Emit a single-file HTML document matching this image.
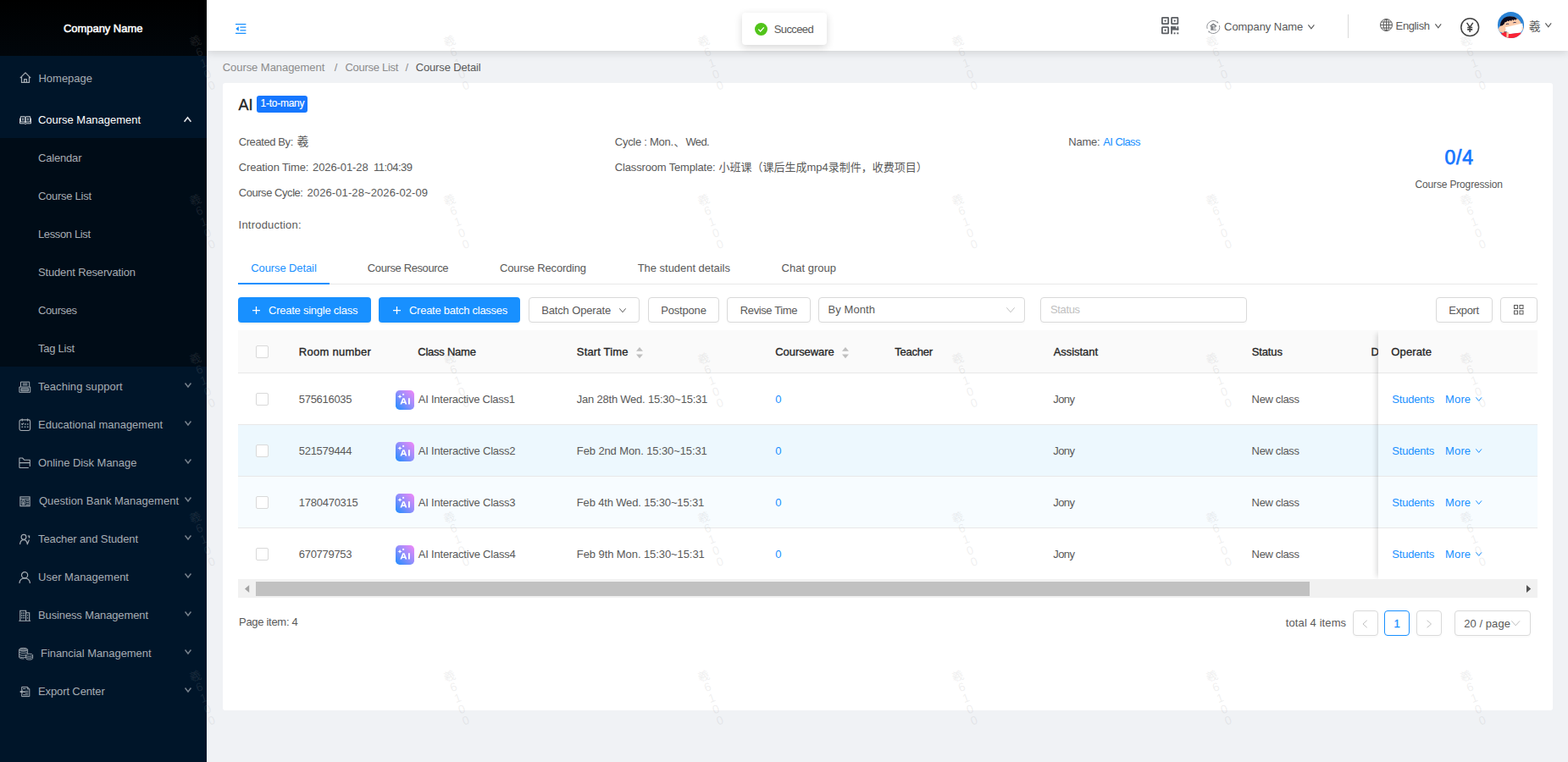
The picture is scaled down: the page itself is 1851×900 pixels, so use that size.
<!DOCTYPE html>
<html lang="en"><head><meta charset="utf-8"><title>Course Detail</title>
<style>
html,body{margin:0;padding:0;}
body{width:1851px;height:900px;overflow:hidden;background:#f0f2f5;position:relative;font-family:"Liberation Sans",sans-serif;font-size:13px;color:#595959;}
.t{position:absolute;white-space:pre;display:block;}
.a{position:absolute;display:block;}
svg{position:absolute;display:block;overflow:visible;}

</style></head>
<body>
<aside><div class="a" style="left:0px;top:0px;width:244px;height:900px;background:#001529"></div><div class="a" style="left:0px;top:0px;width:244px;height:66px;background:linear-gradient(#000,#01060b)"></div><div class="a" style="left:0px;top:163px;width:244px;height:270px;background:#000c17"></div><span class="t" style="left:74.95px;top:26.00px;font-size:13px;line-height:15px;color:#fff;letter-spacing:-0.040px;-webkit-text-stroke:0.5px #fff;">Company Name</span><span class="t" style="left:45.50px;top:85.00px;font-size:13px;line-height:15px;color:#a6adb4;letter-spacing:-0.016px;">Homepage</span><svg style="left:22.9px;top:85px" width="14" height="14" viewBox="0 0 14 14" ><path d="M.8 7.100 7 .9l6.200 6.200M2.500 6v6.400h9V6M5.600 12.400V8.500h2.800v3.900" fill="none" stroke="#a6adb4" stroke-width="1.250" stroke-linejoin="round"/></svg><span class="t" style="left:45.00px;top:134.00px;font-size:13px;line-height:15px;color:#fff;letter-spacing:-0.025px;">Course Management</span><svg style="left:22.5px;top:134px" width="14" height="14" viewBox="0 0 14 14" ><path d="M1.400 3.700h4.600c.6 0 1 .4 1 1v6c0-.5-.4-.8-1-.8H1.400zM12.600 3.700H8c-.6 0-1 .4-1 1v6c0-.5.4-.8 1-.8h4.600zM.5 5.600v6.200h5.300l1.200.8 1.200-.8h5.300V5.600M3 5.900h2.200M3 7.700h2.200M8.800 5.900H11M8.800 7.700H11" fill="none" stroke="#fff" stroke-width=".8"/></svg><svg style="left:217.4px;top:137.6px" width="9" height="6.2" viewBox="0 0 9 6.2" ><path d="M0.56 5.64 4.5 0.76 8.44 5.64" fill="none" stroke="#e4e7ea" stroke-width="1.6"/></svg><span class="t" style="left:45.00px;top:179.00px;font-size:13px;line-height:15px;color:#a6adb4;letter-spacing:-0.181px;">Calendar</span><span class="t" style="left:45.00px;top:224.00px;font-size:13px;line-height:15px;color:#a6adb4;letter-spacing:-0.275px;">Course List</span><span class="t" style="left:45.00px;top:269.00px;font-size:13px;line-height:15px;color:#a6adb4;letter-spacing:-0.377px;">Lesson List</span><span class="t" style="left:45.00px;top:314.00px;font-size:13px;line-height:15px;color:#a6adb4;letter-spacing:-0.155px;">Student Reservation</span><span class="t" style="left:45.00px;top:359.00px;font-size:13px;line-height:15px;color:#a6adb4;letter-spacing:-0.404px;">Courses</span><span class="t" style="left:45.00px;top:404.00px;font-size:13px;line-height:15px;color:#a6adb4;letter-spacing:-0.259px;">Tag List</span><span class="t" style="left:45.00px;top:449.00px;font-size:13px;line-height:15px;color:#a6adb4;letter-spacing:0.046px;">Teaching support</span><svg style="left:21.9px;top:450px" width="14" height="14" viewBox="0 0 14 14" ><path d="M2.500 6.700V1.100h10.200v5.600M4.700 3h5.800M4.700 4.800h5.800M.9 7h12.800v6.300H.9zM3 8.700h8.600v3.200H3zM3 10.300h8.600" fill="none" stroke="#a6adb4" stroke-width="1"/></svg><svg style="left:218px;top:452.2px" width="8" height="5.7" viewBox="0 0 8 5.7" ><path d="M0.52 0.52 4.0 4.98 7.47 0.52" fill="none" stroke="#76818c" stroke-width="1.5"/></svg><span class="t" style="left:45.00px;top:494.00px;font-size:13px;line-height:15px;color:#a6adb4;letter-spacing:-0.011px;">Educational management</span><svg style="left:21.9px;top:495px" width="14" height="14" viewBox="0 0 14 14" ><rect x="1" y=".9" width="12.600" height="12.600" rx="1.900" fill="none" stroke="#a6adb4" stroke-width="1.100"/><path d="M4.200 -.6v3M10.600 -.6v3M3.200 5.400l1.100 1.100 1.700-1.800" fill="none" stroke="#a6adb4" stroke-width="1.100"/><path d="M7 5.300h1.700v1.500H7zM9.900 5.300h1.700v1.500H9.900zM3.400 8.400h1.700v1.500H3.400zM6.700 8.400h1.700v1.500H6.700zM9.900 8.400h1.700v1.500H9.900z" fill="#a6adb4" opacity=".85"/></svg><svg style="left:218px;top:497.2px" width="8" height="5.7" viewBox="0 0 8 5.7" ><path d="M0.52 0.52 4.0 4.98 7.47 0.52" fill="none" stroke="#76818c" stroke-width="1.5"/></svg><span class="t" style="left:45.00px;top:539.00px;font-size:13px;line-height:15px;color:#a6adb4;letter-spacing:-0.039px;">Online Disk Manage</span><svg style="left:21.9px;top:540px" width="14" height="14" viewBox="0 0 14 14" ><path d="M.9 12.500V1h3.600l2.300 2.300h6.500v7.600M.9 6.600h12.400M.9 12.500h10.900" fill="none" stroke="#a6adb4" stroke-width="1.100" stroke-linejoin="round"/></svg><svg style="left:218px;top:542.2px" width="8" height="5.7" viewBox="0 0 8 5.7" ><path d="M0.52 0.52 4.0 4.98 7.47 0.52" fill="none" stroke="#76818c" stroke-width="1.5"/></svg><span class="t" style="left:46.00px;top:584.00px;font-size:13px;line-height:15px;color:#a6adb4;letter-spacing:0.010px;">Question Bank Management</span><svg style="left:21.9px;top:585px" width="14" height="14" viewBox="0 0 14 14" ><rect x="1.900" y="1.900" width="11.200" height="10.800" fill="none" stroke="#a6adb4" stroke-width="1.100"/><path d="M1.900 4.300h11.200M4 5.900h3.200v5H4zM5.600 7.500v3.400M8.600 6.300h3.400M8.600 8.700h3.400M8.600 11h3.400" fill="none" stroke="#a6adb4" stroke-width="1"/></svg><svg style="left:218px;top:587.2px" width="8" height="5.7" viewBox="0 0 8 5.7" ><path d="M0.52 0.52 4.0 4.98 7.47 0.52" fill="none" stroke="#76818c" stroke-width="1.5"/></svg><span class="t" style="left:45.00px;top:629.00px;font-size:13px;line-height:15px;color:#a6adb4;letter-spacing:-0.110px;">Teacher and Student</span><svg style="left:21.9px;top:630px" width="14" height="14" viewBox="0 0 14 14" ><circle cx="6" cy="4.300" r="2.900" fill="none" stroke="#a6adb4" stroke-width="1.150"/><path d="M1.600 13C1.800 9.600 3.600 7.600 6 7.600s4 1.700 4.300 5.200L12.400 7.500" fill="none" stroke="#a6adb4" stroke-width="1.150" stroke-linejoin="round"/><path d="M10.700 2.400h2.500v3h-1.400V3.600h-1.100z" fill="#a6adb4"/></svg><svg style="left:218px;top:632.2px" width="8" height="5.7" viewBox="0 0 8 5.7" ><path d="M0.52 0.52 4.0 4.98 7.47 0.52" fill="none" stroke="#76818c" stroke-width="1.5"/></svg><span class="t" style="left:45.00px;top:674.00px;font-size:13px;line-height:15px;color:#a6adb4;letter-spacing:0.003px;">User Management</span><svg style="left:21.9px;top:675px" width="14" height="14" viewBox="0 0 14 14" ><circle cx="7.100" cy="4.300" r="3.600" fill="none" stroke="#a6adb4" stroke-width="1.200"/><path d="M.9 13.900C1.300 10 3.800 7.900 7.100 7.900s5.900 2.100 6.400 6" fill="none" stroke="#a6adb4" stroke-width="1.200"/></svg><svg style="left:218px;top:677.2px" width="8" height="5.7" viewBox="0 0 8 5.7" ><path d="M0.52 0.52 4.0 4.98 7.47 0.52" fill="none" stroke="#76818c" stroke-width="1.5"/></svg><span class="t" style="left:45.00px;top:719.00px;font-size:13px;line-height:15px;color:#a6adb4;letter-spacing:-0.125px;">Business Management</span><svg style="left:21.9px;top:720px" width="14" height="14" viewBox="0 0 14 14" ><path d="M1.800 13V1.300h6.800V13M8.600 3.700h4.100V13M.3 13.300h13.800" fill="none" stroke="#a6adb4" stroke-width="1.100"/><path d="M3.600 3.300v8M5.200 3.300v8M6.800 3.300v8M10.600 5.800v2M10.600 9v2" fill="none" stroke="#a6adb4" stroke-width=".9" stroke-dasharray="1.800 .9"/></svg><svg style="left:218px;top:722.2px" width="8" height="5.7" viewBox="0 0 8 5.7" ><path d="M0.52 0.52 4.0 4.98 7.47 0.52" fill="none" stroke="#76818c" stroke-width="1.5"/></svg><span class="t" style="left:48.00px;top:764.00px;font-size:13px;line-height:15px;color:#a6adb4;letter-spacing:-0.049px;">Financial Management</span><svg style="left:21.9px;top:765px" width="14" height="14" viewBox="0 0 14 14" ><ellipse cx="5.600" cy="2.300" rx="5" ry="1.900" fill="#a6adb4" fill-opacity=".55" stroke="#a6adb4" stroke-width=".9"/><path d="M.6 2.300v8.900c0 1.300 3 1.900 6 1.700M10.600 2.300v4.500M.6 4.900c0 2 10 2 10 0M.6 7.400c0 1.600 4 2 7.600 1.500M.6 9.900c0 1.500 4 2 7.600 1.500" fill="none" stroke="#a6adb4" stroke-width=".9"/><ellipse cx="12.600" cy="8.700" rx="4" ry="1.500" fill="none" stroke="#a6adb4" stroke-width=".9"/><path d="M8.600 8.700v3.900c0 2 8 2 8 0V8.700M8.600 10.700c0 2 8 2 8 0" fill="none" stroke="#a6adb4" stroke-width=".9"/></svg><svg style="left:218px;top:767.2px" width="8" height="5.7" viewBox="0 0 8 5.7" ><path d="M0.52 0.52 4.0 4.98 7.47 0.52" fill="none" stroke="#76818c" stroke-width="1.5"/></svg><span class="t" style="left:45.00px;top:809.00px;font-size:13px;line-height:15px;color:#a6adb4;letter-spacing:-0.117px;">Export Center</span><svg style="left:21.9px;top:810px" width="14" height="14" viewBox="0 0 14 14" ><path d="M3.700 5V1.400h6.800l2.300 2.300v8.900H3.700V9.200M10.300 1.600v2.300h2.300M5 3.400h3.400M7.600 6.400h3.800M7.600 8.600h3.800M5.200 10.700h6.200" fill="none" stroke="#a6adb4" stroke-width="1"/><path d="M1 7l3.600-2.500v1.800h3.200v1.400H4.600v1.800z" fill="#a6adb4"/></svg><svg style="left:218px;top:812.2px" width="8" height="5.700" viewBox="0 0 8 5.7" ><path d="M0.52 0.52 4.0 4.98 7.47 0.52" fill="none" stroke="#76818c" stroke-width="1.5"/></svg></aside>
<header><div class="a" style="left:244px;top:0px;width:1607px;height:60px;background:#fff;box-shadow:0 2px 10px rgba(0,0,0,.14)"></div><svg style="left:278px;top:28px" width="13" height="12" viewBox="0 0 13 12" ><path d="M0 .6h12.400M5.400 4.200h7M5.400 7.800h7M0 11.400h12.400" stroke="#1890ff" stroke-width="1.200" fill="none"/><path d="M3.800 3.200v5.600L.3 6z" fill="#1890ff"/></svg><div class="a" style="left:876px;top:15px;width:100px;height:38px;background:#fff;border-radius:4px;box-shadow:0 3px 10px rgba(0,0,0,.16)"></div><svg style="left:891px;top:27px" width="15" height="15" viewBox="0 0 15 15" ><circle cx="7.500" cy="7.500" r="7.500" fill="#52c41a"/><path d="M4.300 7.600 6.700 10l4.100-4.600" fill="none" stroke="#fff" stroke-width="1.300"/></svg><span class="t" style="left:913.70px;top:27.00px;font-size:13px;line-height:15px;color:#595959;letter-spacing:-0.599px;">Succeed</span><svg style="left:1371.05px;top:20.05px" width="20.4" height="20.4" viewBox="0 0 20.4 20.4" ><g fill="none" stroke="#5c5f64" stroke-width="1.800"><rect x=".9" y=".9" width="7.300" height="7.300" rx=".6"/><rect x="12.100" y=".9" width="7.300" height="7.300" rx=".6"/><rect x=".9" y="12.100" width="7.300" height="7.300" rx=".6"/></g><g fill="#5c5f64"><circle cx="4.550" cy="4.550" r="1.150"/><circle cx="15.750" cy="4.550" r="1.150"/><circle cx="4.550" cy="15.750" r="1.150"/><rect x="11.200" y="11.200" width="1.800" height="9.100"/><rect x="11.200" y="11.200" width="6" height="3.600"/><rect x="18.500" y="11.200" width="1.800" height="4.400"/><rect x="13" y="13.400" width="7.300" height="2.200"/><rect x="14.600" y="18.400" width="1.900" height="1.900"/><rect x="18.400" y="18.400" width="1.900" height="1.900"/></g></svg><svg style="left:1423.6px;top:23.9px" width="16.6" height="16" viewBox="0 0 16.6 16" ><path d="M1.15 9.92A7.4 7.4 0 0 1 13.25 2.50M15.45 6.08A7.4 7.4 0 0 1 3.35 13.50" fill="none" stroke="#8e9196" stroke-width="1"/><path d="M14.44 3.57L13.68 1.13L11.94 3.07zM2.16 12.43L2.92 14.87L4.66 12.93z" fill="#8e9196"/><path d="M4.600 7.100 8.300 4.400 12 7.100" fill="none" stroke="#7d8085" stroke-width="1.300"/><path d="M5.900 7.400h1.900v3.400H5.900zM8.700 7.300h2.600M8.700 9h2.200M5.200 11.200h6.600" fill="none" stroke="#7d8085" stroke-width="1.100"/><rect x="6" y="7.400" width="1.800" height="3.600" fill="#7d8085"/></svg><span class="t" style="left:1445.10px;top:24.00px;font-size:13px;line-height:15px;color:#595959;letter-spacing:-0.067px;">Company Name</span><svg style="left:1543.8px;top:29px" width="7.8" height="5.5" viewBox="0 0 7.8 5.5" ><path d="M0.40 0.40 3.9 4.90 7.40 0.40" fill="none" stroke="#595959" stroke-width="1.15"/></svg><div class="a" style="left:1591px;top:17px;width:1px;height:28px;background:#d9d9d9"></div><svg style="left:1629.2px;top:21.8px" width="15" height="15" viewBox="0 0 15 15" ><g fill="none" stroke="#595959" stroke-width="1"><circle cx="7.500" cy="7.500" r="7"/><ellipse cx="7.500" cy="7.500" rx="3.200" ry="7"/><path d="M7.500 .5v14M.5 7.500h14M1.500 4h12M1.500 11h12"/></g></svg><span class="t" style="left:1647.60px;top:23.00px;font-size:13px;line-height:15px;color:#595959;letter-spacing:-0.373px;">English</span><svg style="left:1694px;top:27.8px" width="7.6" height="5.4" viewBox="0 0 7.6 5.4" ><path d="M0.40 0.40 3.8 4.80 7.20 0.40" fill="none" stroke="#595959" stroke-width="1.15"/></svg><svg style="left:1723.8px;top:20.7px" width="22.4" height="22.4" viewBox="0 0 22.4 22.4" ><circle cx="11.200" cy="11.200" r="10.400" fill="none" stroke="#434343" stroke-width="1.500"/><path d="M7.600 5.900l3.600 5.300 3.600-5.300M11.200 11v6M8.200 11.500h6M8.200 13.900h6" fill="none" stroke="#434343" stroke-width="1.550"/></svg><svg style="left:1768.05px;top:13.9px" width="31.1" height="31.1" viewBox="0 0 31.1 31.1" ><defs><clipPath id="avc"><circle cx="15.550" cy="15.550" r="15.550"/></clipPath></defs><g clip-path="url(#avc)"><rect width="31.100" height="31.100" fill="#2a82d4"/><path d="M3.200 18C2.600 11 8 5.600 14.500 5.600c5 0 9 1.500 12.500 6.500l2 6-3 6-20 2z" fill="#fccbaa"/><path d="M3 17.800C2.400 10 8 5.200 14.500 5.300c4 0 7.400 1.200 9 3.400l-1.800-.2-.5 1.500-1.600-1.200-.9 1.700-1.600-1.400-1.100 1.800-1.600-1.200-1.300 1.600-1.600-.9-1.300 1.700-1.700.1-.9 2.300-1.200.8-1.400 2z" fill="#0b0b1e"/><path d="M9.800 14.700c1-.6 2.400-.7 3.400-.4M18.300 12.900c1-.5 2.300-.6 3.300-.3" stroke="#23234a" stroke-width=".9" fill="none"/><path d="M8.800 18.200 29.200 13.500l1 6.200-3 5-13.500 1.500-4.700-3.200z" fill="#fff"/><path d="M28.700 17.500c1.500.5 1.800 3 0 5z" fill="#f4c2a2"/><path d="M4 25.500 9 23.800l4.500 2.400 13.700-1.600 2.500 2.400-3 4.500H7z" fill="#fb2335"/><path d="M10.500 24h2.600l-.7 7.500h-2z" fill="#fccbaa"/><circle cx="5.300" cy="20.400" r="4.200" fill="#fccbaa"/><path d="M7.500 23.800c1.200-.3 2.600-.2 3.800.2" stroke="#3b3558" stroke-width=".8" fill="none"/></g></svg><span class="t" style="left:1804.70px;top:23.50px;font-size:13.8px;line-height:15px;color:#595959;font-family:'Liberation Sans','Noto Sans CJK SC',sans-serif;">羲</span><svg style="left:1823.7px;top:26.9px" width="7.6" height="5.4" viewBox="0 0 7.6 5.4" ><path d="M0.40 0.40 3.8 4.80 7.20 0.40" fill="none" stroke="#595959" stroke-width="1.15"/></svg></header>
<nav><span class="t" style="left:262.70px;top:72.00px;font-size:13px;line-height:15px;color:#8c8c8c;letter-spacing:-0.050px;">Course Management</span><span class="t" style="left:394.80px;top:72.00px;font-size:13px;line-height:15px;color:#8c8c8c;">/</span><span class="t" style="left:407.50px;top:72.00px;font-size:13px;line-height:15px;color:#8c8c8c;letter-spacing:-0.295px;">Course List</span><span class="t" style="left:478.60px;top:72.00px;font-size:13px;line-height:15px;color:#8c8c8c;">/</span><span class="t" style="left:490.70px;top:72.00px;font-size:13px;line-height:15px;color:#595959;letter-spacing:-0.147px;">Course Detail</span></nav>
<main><div class="a" style="left:263px;top:98px;width:1570px;height:741px;background:#fff;border-radius:3px"></div><span class="t" style="left:281.60px;top:113.70px;font-size:18px;line-height:20px;color:#1f1f1f;letter-spacing:-0.016px;-webkit-text-stroke:0.35px #1f1f1f;">AI</span><div class="a" style="left:303px;top:113px;width:60px;height:20px;background:#1677ff;border-radius:3px"></div><span class="t" style="left:307.50px;top:115.00px;font-size:12px;line-height:14px;color:#fff;letter-spacing:-0.254px;-webkit-text-stroke:0.15px #fff;">1-to-many</span><span class="t" style="left:281.70px;top:160.00px;font-size:13px;line-height:15px;color:#595959;letter-spacing:-0.406px;">Created By:</span><span class="t" style="left:350.40px;top:160.00px;font-size:13.8px;line-height:15px;color:#595959;font-family:'Liberation Sans','Noto Sans CJK SC',sans-serif;">羲</span><span class="t" style="left:281.70px;top:190.00px;font-size:13px;line-height:15px;color:#595959;letter-spacing:-0.134px;">Creation Time:</span><span class="t" style="left:369.00px;top:190.00px;font-size:13px;line-height:15px;color:#595959;letter-spacing:-0.089px;">2026-01-28</span><span class="t" style="left:441.00px;top:190.00px;font-size:13px;line-height:15px;color:#595959;letter-spacing:-0.520px;">11:04:39</span><span class="t" style="left:281.70px;top:220.00px;font-size:13px;line-height:15px;color:#595959;letter-spacing:-0.445px;">Course Cycle:</span><span class="t" style="left:362.50px;top:220.00px;font-size:13px;line-height:15px;color:#595959;letter-spacing:0.100px;">2026-01-28~2026-02-09</span><span class="t" style="left:281.60px;top:258.00px;font-size:13px;line-height:15px;color:#595959;letter-spacing:0.204px;">Introduction:</span><span class="t" style="left:725.80px;top:160.00px;font-size:13px;line-height:15px;color:#595959;letter-spacing:-0.277px;">Cycle : Mon.</span><span class="t" style="left:795.50px;top:160.00px;font-size:13px;line-height:15px;color:#595959;font-family:'Liberation Sans','Noto Sans CJK SC',sans-serif;">、</span><span class="t" style="left:809.40px;top:160.00px;font-size:13px;line-height:15px;color:#595959;letter-spacing:-0.603px;">Wed.</span><span class="t" style="left:725.80px;top:190.00px;font-size:13px;line-height:15px;color:#595959;letter-spacing:-0.165px;">Classroom Template:</span><span class="t" style="left:848.50px;top:190.00px;font-size:13px;line-height:15px;color:#595959;font-family:'Liberation Sans','Noto Sans CJK SC',sans-serif;">小班课（课后生成mp4录制件，收费项目）</span><span class="t" style="left:1261.30px;top:160.00px;font-size:13px;line-height:15px;color:#595959;letter-spacing:-0.249px;">Name:</span><span class="t" style="left:1302.30px;top:160.00px;font-size:13px;line-height:15px;color:#1890ff;letter-spacing:-0.601px;">AI Class</span><span class="t" style="left:1705.50px;top:173.00px;font-size:23px;line-height:26px;color:#1677ff;letter-spacing:0.808px;-webkit-text-stroke:0.75px #1677ff;">0/4</span><span class="t" style="left:1670.50px;top:211.00px;font-size:12px;line-height:14px;color:#595959;letter-spacing:-0.157px;">Course Progression</span><div class="a" style="left:281px;top:335px;width:1534px;height:1px;background:#e8e8e8"></div><div class="a" style="left:281px;top:334px;width:108px;height:2px;background:#1890ff"></div><span class="t" style="left:296.30px;top:309.40px;font-size:13px;line-height:15px;color:#1890ff;letter-spacing:-0.105px;">Course Detail</span><span class="t" style="left:433.80px;top:309.40px;font-size:13px;line-height:15px;color:#595959;letter-spacing:-0.383px;">Course Resource</span><span class="t" style="left:590.10px;top:309.40px;font-size:13px;line-height:15px;color:#595959;letter-spacing:-0.185px;">Course Recording</span><span class="t" style="left:752.70px;top:309.40px;font-size:13px;line-height:15px;color:#595959;letter-spacing:-0.031px;">The student details</span><span class="t" style="left:922.50px;top:309.40px;font-size:13px;line-height:15px;color:#595959;letter-spacing:0.030px;">Chat group</span><div class="a" style="left:281px;top:351px;width:157px;height:30px;background:#1890ff;border-radius:4px;box-shadow:0 2px 0 rgba(0,0,0,.045)"></div><svg style="left:298px;top:361.5px" width="9" height="9" viewBox="0 0 9 9" ><path d="M4.500 0v9M0 4.500h9" stroke="#fff" stroke-width="1.250" fill="none"/></svg><span class="t" style="left:317.00px;top:359.20px;font-size:13px;line-height:15px;color:#fff;letter-spacing:-0.240px;">Create single class</span><div class="a" style="left:447px;top:351px;width:167px;height:30px;background:#1890ff;border-radius:4px;box-shadow:0 2px 0 rgba(0,0,0,.045)"></div><svg style="left:464px;top:361.5px" width="9" height="9" viewBox="0 0 9 9" ><path d="M4.500 0v9M0 4.500h9" stroke="#fff" stroke-width="1.250" fill="none"/></svg><span class="t" style="left:483.00px;top:359.20px;font-size:13px;line-height:15px;color:#fff;letter-spacing:-0.269px;">Create batch classes</span><div class="a" style="left:624px;top:351px;width:131px;height:30px;box-sizing:border-box;background:#fff;border:1px solid #d9d9d9;border-radius:4px;box-shadow:0 2px 0 rgba(0,0,0,.015)"></div><span class="t" style="left:639.20px;top:359.40px;font-size:13px;line-height:15px;color:#595959;letter-spacing:-0.144px;">Batch Operate</span><svg style="left:730.8px;top:363.8px" width="8" height="5.4" viewBox="0 0 8 5.4" ><path d="M0.35 0.35 4.0 4.85 7.65 0.35" fill="none" stroke="#595959" stroke-width="1"/></svg><div class="a" style="left:765px;top:351px;width:84px;height:30px;box-sizing:border-box;background:#fff;border:1px solid #d9d9d9;border-radius:4px;box-shadow:0 2px 0 rgba(0,0,0,.015)"></div><span class="t" style="left:780.20px;top:359.40px;font-size:13px;line-height:15px;color:#595959;letter-spacing:-0.177px;">Postpone</span><div class="a" style="left:858px;top:351px;width:99px;height:30px;box-sizing:border-box;background:#fff;border:1px solid #d9d9d9;border-radius:4px;box-shadow:0 2px 0 rgba(0,0,0,.015)"></div><span class="t" style="left:873.80px;top:359.40px;font-size:13px;line-height:15px;color:#595959;letter-spacing:-0.393px;">Revise Time</span><div class="a" style="left:966px;top:351px;width:244px;height:30px;box-sizing:border-box;background:#fff;border:1px solid #d9d9d9;border-radius:4px;box-shadow:0 2px 0 rgba(0,0,0,.015)"></div><span class="t" style="left:977.60px;top:358.40px;font-size:13px;line-height:15px;color:#595959;letter-spacing:0.068px;">By Month</span><svg style="left:1187.6px;top:363px" width="10" height="6.4" viewBox="0 0 10 6.4" ><path d="M0.35 0.35 5.0 5.85 9.65 0.35" fill="none" stroke="#bfbfbf" stroke-width="1"/></svg><div class="a" style="left:1228px;top:351px;width:244px;height:30px;box-sizing:border-box;background:#fff;border:1px solid #d9d9d9;border-radius:4px;box-shadow:0 2px 0 rgba(0,0,0,.015)"></div><span class="t" style="left:1240.00px;top:358.40px;font-size:13px;line-height:15px;color:#bfbfbf;letter-spacing:-0.372px;">Status</span><div class="a" style="left:1695px;top:351px;width:67px;height:30px;box-sizing:border-box;background:#fff;border:1px solid #d9d9d9;border-radius:4px;box-shadow:0 2px 0 rgba(0,0,0,.015)"></div><span class="t" style="left:1710.30px;top:359.40px;font-size:13px;line-height:15px;color:#595959;letter-spacing:-0.336px;">Export</span><div class="a" style="left:1771px;top:351px;width:44px;height:30px;box-sizing:border-box;background:#fff;border:1px solid #d9d9d9;border-radius:4px;box-shadow:0 2px 0 rgba(0,0,0,.015)"></div><svg style="left:1787px;top:360.4px" width="11.5" height="11.5" viewBox="0 0 11.5 11.5" ><g fill="none" stroke="#595959" stroke-width="1"><rect x=".5" y=".5" width="4" height="4"/><rect x="7" y=".5" width="4" height="4"/><rect x=".5" y="7" width="4" height="4"/><rect x="7" y="7" width="4" height="4"/></g></svg><div class="a" style="left:281px;top:390px;width:1534px;height:50px;background:#fafafa"></div><div class="a" style="left:281px;top:502px;width:1534px;height:60px;background:#edf8fe"></div><div class="a" style="left:281px;top:563px;width:1534px;height:60px;background:#f7fcff"></div><div class="a" style="left:281px;top:440px;width:1534px;height:1px;background:#e8e8e8"></div><div class="a" style="left:281px;top:501px;width:1534px;height:1px;background:#e8e8e8"></div><div class="a" style="left:281px;top:562px;width:1534px;height:1px;background:#e8e8e8"></div><div class="a" style="left:281px;top:623px;width:1534px;height:1px;background:#e8e8e8"></div><div class="a" style="left:281px;top:684px;width:1534px;height:1px;background:#e8e8e8"></div><div class="a" style="left:302px;top:408px;width:15px;height:15px;box-sizing:border-box;background:#fff;border:1px solid #d9d9d9;border-radius:2px"></div><span class="t" style="left:352.80px;top:408.10px;font-size:13px;line-height:15px;color:#262626;letter-spacing:0.272px;-webkit-text-stroke:0.33px #262626;">Room number</span><span class="t" style="left:493.30px;top:408.10px;font-size:13px;line-height:15px;color:#262626;letter-spacing:-0.244px;-webkit-text-stroke:0.33px #262626;">Class Name</span><span class="t" style="left:680.80px;top:408.10px;font-size:13px;line-height:15px;color:#262626;letter-spacing:0.161px;-webkit-text-stroke:0.33px #262626;">Start Time</span><span class="t" style="left:915.30px;top:408.10px;font-size:13px;line-height:15px;color:#262626;letter-spacing:-0.077px;-webkit-text-stroke:0.33px #262626;">Courseware</span><span class="t" style="left:1056.30px;top:408.10px;font-size:13px;line-height:15px;color:#262626;letter-spacing:-0.242px;-webkit-text-stroke:0.33px #262626;">Teacher</span><span class="t" style="left:1243.70px;top:408.10px;font-size:13px;line-height:15px;color:#262626;letter-spacing:-0.044px;-webkit-text-stroke:0.33px #262626;">Assistant</span><span class="t" style="left:1477.70px;top:408.10px;font-size:13px;line-height:15px;color:#262626;letter-spacing:-0.112px;-webkit-text-stroke:0.33px #262626;">Status</span><svg style="left:750.6px;top:409.8px" width="8" height="13.2" viewBox="0 0 8 13.2" ><path d="M0 4.800 4 0l4 4.800zM0 8.400 4 13.200l4-4.800z" fill="#bfbfbf"/></svg><svg style="left:993.6px;top:409.8px" width="8" height="13.2" viewBox="0 0 8 13.2" ><path d="M0 4.800 4 0l4 4.800zM0 8.400 4 13.200l4-4.800z" fill="#bfbfbf"/></svg><div class="a" style="left:302px;top:464px;width:15px;height:15px;box-sizing:border-box;background:#fff;border:1px solid #d9d9d9;border-radius:2px"></div><span class="t" style="left:352.80px;top:464.30px;font-size:13px;line-height:15px;color:#595959;letter-spacing:-0.297px;">575616035</span><svg style="left:467px;top:460.9px" width="22" height="23" viewBox="0 0 22 23" ><defs><linearGradient id="aig0" x1="0" y1="1" x2="1" y2="0"><stop offset=".08" stop-color="#2f8dff"/><stop offset=".55" stop-color="#9a8efb"/><stop offset=".95" stop-color="#ec88f8"/></linearGradient></defs><rect width="22" height="23" rx="4.800" fill="url(#aig0)"/><path d="M5.400 16.500 8.300 9.200h2.200l2.900 7.300h-1.900l-.55-1.600H7.850l-.55 1.600zM8.400 13.500h2L9.400 10.700zM15 9.200h1.850v7.300H15z" fill="#fff"/><path d="M5.060 4.600C5.300 6.500 5.900 7.100 7.860 7.400 5.900 7.700 5.300 8.300 5.060 10.200 4.800 8.300 4.200 7.700 2.260 7.400 4.200 7.100 4.800 6.500 5.060 4.600z" fill="#fff"/><circle cx="9.100" cy="4.900" r="1.150" fill="#fff" opacity=".92"/></svg><span class="t" style="left:493.80px;top:464.30px;font-size:13px;line-height:15px;color:#595959;letter-spacing:-0.246px;">AI Interactive Class1</span><span class="t" style="left:680.80px;top:464.30px;font-size:13px;line-height:15px;color:#595959;letter-spacing:-0.223px;">Jan 28th Wed. 15:30~15:31</span><span class="t" style="left:915.30px;top:464.30px;font-size:13px;line-height:15px;color:#1890ff;">0</span><span class="t" style="left:1243.30px;top:464.30px;font-size:13px;line-height:15px;color:#595959;letter-spacing:-0.623px;">Jony</span><span class="t" style="left:1477.60px;top:464.30px;font-size:13px;line-height:15px;color:#595959;letter-spacing:-0.356px;">New class</span><div class="a" style="left:302px;top:525px;width:15px;height:15px;box-sizing:border-box;background:#fff;border:1px solid #d9d9d9;border-radius:2px"></div><span class="t" style="left:352.80px;top:525.30px;font-size:13px;line-height:15px;color:#595959;letter-spacing:-0.297px;">521579444</span><svg style="left:467px;top:521.9px" width="22" height="23" viewBox="0 0 22 23" ><defs><linearGradient id="aig1" x1="0" y1="1" x2="1" y2="0"><stop offset=".08" stop-color="#2f8dff"/><stop offset=".55" stop-color="#9a8efb"/><stop offset=".95" stop-color="#ec88f8"/></linearGradient></defs><rect width="22" height="23" rx="4.800" fill="url(#aig1)"/><path d="M5.400 16.500 8.300 9.200h2.200l2.900 7.300h-1.900l-.55-1.600H7.850l-.55 1.600zM8.400 13.500h2L9.400 10.700zM15 9.200h1.850v7.300H15z" fill="#fff"/><path d="M5.060 4.600C5.300 6.500 5.900 7.100 7.860 7.400 5.900 7.700 5.300 8.300 5.060 10.200 4.800 8.300 4.200 7.700 2.260 7.400 4.200 7.100 4.800 6.500 5.060 4.600z" fill="#fff"/><circle cx="9.100" cy="4.900" r="1.150" fill="#fff" opacity=".92"/></svg><span class="t" style="left:493.80px;top:525.30px;font-size:13px;line-height:15px;color:#595959;letter-spacing:-0.221px;">AI Interactive Class2</span><span class="t" style="left:680.80px;top:525.30px;font-size:13px;line-height:15px;color:#595959;letter-spacing:-0.108px;">Feb 2nd Mon. 15:30~15:31</span><span class="t" style="left:915.30px;top:525.30px;font-size:13px;line-height:15px;color:#1890ff;">0</span><span class="t" style="left:1243.30px;top:525.30px;font-size:13px;line-height:15px;color:#595959;letter-spacing:-0.623px;">Jony</span><span class="t" style="left:1477.60px;top:525.30px;font-size:13px;line-height:15px;color:#595959;letter-spacing:-0.356px;">New class</span><div class="a" style="left:302px;top:586px;width:15px;height:15px;box-sizing:border-box;background:#fff;border:1px solid #d9d9d9;border-radius:2px"></div><span class="t" style="left:352.80px;top:586.30px;font-size:13px;line-height:15px;color:#595959;letter-spacing:-0.257px;">1780470315</span><svg style="left:467px;top:582.9px" width="22" height="23" viewBox="0 0 22 23" ><defs><linearGradient id="aig2" x1="0" y1="1" x2="1" y2="0"><stop offset=".08" stop-color="#2f8dff"/><stop offset=".55" stop-color="#9a8efb"/><stop offset=".95" stop-color="#ec88f8"/></linearGradient></defs><rect width="22" height="23" rx="4.800" fill="url(#aig2)"/><path d="M5.400 16.500 8.300 9.200h2.200l2.900 7.300h-1.900l-.55-1.600H7.850l-.55 1.600zM8.400 13.500h2L9.400 10.700zM15 9.200h1.850v7.300H15z" fill="#fff"/><path d="M5.060 4.600C5.300 6.500 5.900 7.100 7.860 7.400 5.900 7.700 5.300 8.300 5.060 10.200 4.800 8.300 4.200 7.700 2.260 7.400 4.200 7.100 4.800 6.500 5.060 4.600z" fill="#fff"/><circle cx="9.100" cy="4.900" r="1.150" fill="#fff" opacity=".92"/></svg><span class="t" style="left:493.80px;top:586.30px;font-size:13px;line-height:15px;color:#595959;letter-spacing:-0.221px;">AI Interactive Class3</span><span class="t" style="left:680.80px;top:586.30px;font-size:13px;line-height:15px;color:#595959;letter-spacing:-0.156px;">Feb 4th Wed. 15:30~15:31</span><span class="t" style="left:915.30px;top:586.30px;font-size:13px;line-height:15px;color:#1890ff;">0</span><span class="t" style="left:1243.30px;top:586.30px;font-size:13px;line-height:15px;color:#595959;letter-spacing:-0.623px;">Jony</span><span class="t" style="left:1477.60px;top:586.30px;font-size:13px;line-height:15px;color:#595959;letter-spacing:-0.356px;">New class</span><div class="a" style="left:302px;top:647px;width:15px;height:15px;box-sizing:border-box;background:#fff;border:1px solid #d9d9d9;border-radius:2px"></div><span class="t" style="left:352.80px;top:647.30px;font-size:13px;line-height:15px;color:#595959;letter-spacing:-0.297px;">670779753</span><svg style="left:467px;top:643.9px" width="22" height="23" viewBox="0 0 22 23" ><defs><linearGradient id="aig3" x1="0" y1="1" x2="1" y2="0"><stop offset=".08" stop-color="#2f8dff"/><stop offset=".55" stop-color="#9a8efb"/><stop offset=".95" stop-color="#ec88f8"/></linearGradient></defs><rect width="22" height="23" rx="4.800" fill="url(#aig3)"/><path d="M5.400 16.500 8.300 9.200h2.200l2.900 7.300h-1.900l-.55-1.600H7.850l-.55 1.600zM8.400 13.500h2L9.400 10.700zM15 9.200h1.850v7.300H15z" fill="#fff"/><path d="M5.060 4.600C5.300 6.500 5.900 7.100 7.860 7.400 5.900 7.700 5.300 8.300 5.060 10.200 4.800 8.300 4.200 7.700 2.260 7.400 4.200 7.100 4.800 6.500 5.060 4.600z" fill="#fff"/><circle cx="9.100" cy="4.900" r="1.150" fill="#fff" opacity=".92"/></svg><span class="t" style="left:493.80px;top:647.30px;font-size:13px;line-height:15px;color:#595959;letter-spacing:-0.211px;">AI Interactive Class4</span><span class="t" style="left:680.80px;top:647.30px;font-size:13px;line-height:15px;color:#595959;letter-spacing:-0.082px;">Feb 9th Mon. 15:30~15:31</span><span class="t" style="left:915.30px;top:647.30px;font-size:13px;line-height:15px;color:#1890ff;">0</span><span class="t" style="left:1243.30px;top:647.30px;font-size:13px;line-height:15px;color:#595959;letter-spacing:-0.623px;">Jony</span><span class="t" style="left:1477.60px;top:647.30px;font-size:13px;line-height:15px;color:#595959;letter-spacing:-0.356px;">New class</span><div class="a" style="left:1610px;top:390px;width:16.5px;height:50px;overflow:hidden"><span class="t" style="left:8.600px;top:18.100px;font-size:13px;line-height:15px;-webkit-text-stroke:.33px #262626;color:#262626">Date</span></div><div class="a" style="left:1626.5px;top:390px;width:188.5px;height:295px;box-shadow:-6px 0 6px -4px rgba(0,0,0,.15);clip-path:inset(0 0 0 -10px)"><div class="a" style="left:0;top:0;width:188.500px;height:50px;background:#fafafa"></div><div class="a" style="left:0;top:51px;width:188.500px;height:60px;background:#fff"></div><div class="a" style="left:0;top:112px;width:188.500px;height:60px;background:#edf8fe"></div><div class="a" style="left:0;top:173px;width:188.500px;height:60px;background:#f7fcff"></div><div class="a" style="left:0;top:234px;width:188.500px;height:60px;background:#fff"></div><div class="a" style="left:0;top:50px;width:188.500px;height:1px;background:#e8e8e8"></div><div class="a" style="left:0;top:111px;width:188.500px;height:1px;background:#e8e8e8"></div><div class="a" style="left:0;top:172px;width:188.500px;height:1px;background:#e8e8e8"></div><div class="a" style="left:0;top:233px;width:188.500px;height:1px;background:#e8e8e8"></div><div class="a" style="left:0;top:294px;width:188.500px;height:1px;background:#e8e8e8"></div></div><span class="t" style="left:1642.30px;top:408.10px;font-size:13px;line-height:15px;color:#262626;letter-spacing:0.136px;-webkit-text-stroke:0.33px #262626;">Operate</span><span class="t" style="left:1643.30px;top:464.30px;font-size:13px;line-height:15px;color:#1890ff;letter-spacing:-0.204px;">Students</span><span class="t" style="left:1706.00px;top:464.30px;font-size:13px;line-height:15px;color:#1890ff;letter-spacing:0.158px;">More</span><svg style="left:1742px;top:468.5px" width="7.4" height="5" viewBox="0 0 7.4 5" ><path d="M0.35 0.35 3.7 4.45 7.05 0.35" fill="none" stroke="#1890ff" stroke-width="1"/></svg><span class="t" style="left:1643.30px;top:525.30px;font-size:13px;line-height:15px;color:#1890ff;letter-spacing:-0.204px;">Students</span><span class="t" style="left:1706.00px;top:525.30px;font-size:13px;line-height:15px;color:#1890ff;letter-spacing:0.158px;">More</span><svg style="left:1742px;top:529.5px" width="7.4" height="5" viewBox="0 0 7.4 5" ><path d="M0.35 0.35 3.7 4.45 7.05 0.35" fill="none" stroke="#1890ff" stroke-width="1"/></svg><span class="t" style="left:1643.30px;top:586.30px;font-size:13px;line-height:15px;color:#1890ff;letter-spacing:-0.204px;">Students</span><span class="t" style="left:1706.00px;top:586.30px;font-size:13px;line-height:15px;color:#1890ff;letter-spacing:0.158px;">More</span><svg style="left:1742px;top:590.5px" width="7.4" height="5" viewBox="0 0 7.4 5" ><path d="M0.35 0.35 3.7 4.45 7.05 0.35" fill="none" stroke="#1890ff" stroke-width="1"/></svg><span class="t" style="left:1643.30px;top:647.30px;font-size:13px;line-height:15px;color:#1890ff;letter-spacing:-0.204px;">Students</span><span class="t" style="left:1706.00px;top:647.30px;font-size:13px;line-height:15px;color:#1890ff;letter-spacing:0.158px;">More</span><svg style="left:1742px;top:651.5px" width="7.4" height="5" viewBox="0 0 7.4 5" ><path d="M0.35 0.35 3.7 4.45 7.05 0.35" fill="none" stroke="#1890ff" stroke-width="1"/></svg><div class="a" style="left:281px;top:684px;width:1534px;height:22px;background:#f1f1f1"></div><div class="a" style="left:302px;top:687px;width:1244px;height:17px;background:#c1c1c1"></div><svg style="left:288.8px;top:691px" width="5.2" height="9" viewBox="0 0 5.2 9" ><path d="M5.200 0v9L0 4.500z" fill="#a3a3a3"/></svg><svg style="left:1802.1px;top:691px" width="5.2" height="9" viewBox="0 0 5.2 9" ><path d="M0 0v9L5.200 4.500z" fill="#505050"/></svg><span class="t" style="left:282.00px;top:727.00px;font-size:13px;line-height:15px;color:#595959;letter-spacing:-0.291px;">Page item: 4</span><span class="t" style="left:1517.80px;top:728.00px;font-size:13px;line-height:15px;color:#595959;letter-spacing:0.101px;">total 4 items</span><div class="a" style="left:1597px;top:721px;width:30px;height:30px;box-sizing:border-box;background:#fff;border:1px solid #d9d9d9;border-radius:4px;box-shadow:0 2px 0 rgba(0,0,0,.015)"></div><svg style="left:1608.4px;top:731.6px" width="6.4" height="10" viewBox="0 0 6.4 10" ><path d="M5.800 .7 1 5l4.800 4.300" fill="none" stroke="#bfbfbf" stroke-width="1"/></svg><div class="a" style="left:1634px;top:721px;width:30px;height:30px;box-sizing:border-box;background:#fff;border:1px solid #1890ff;border-radius:4px"></div><span class="t" style="left:1645.58px;top:728.60px;font-size:13px;line-height:15px;color:#1890ff;-webkit-text-stroke:0.3px #1890ff;">1</span><div class="a" style="left:1672px;top:721px;width:30px;height:30px;box-sizing:border-box;background:#fff;border:1px solid #d9d9d9;border-radius:4px;box-shadow:0 2px 0 rgba(0,0,0,.015)"></div><svg style="left:1683.7px;top:731.6px" width="6.4" height="10" viewBox="0 0 6.4 10" ><path d="M.7 .7 5.500 5 .7 9.300" fill="none" stroke="#bfbfbf" stroke-width="1"/></svg><div class="a" style="left:1717px;top:721px;width:90px;height:30px;box-sizing:border-box;background:#fff;border:1px solid #d9d9d9;border-radius:4px;box-shadow:0 2px 0 rgba(0,0,0,.015)"></div><span class="t" style="left:1728.30px;top:728.60px;font-size:13px;line-height:15px;color:#595959;letter-spacing:0.048px;">20 / page</span><svg style="left:1784.3px;top:733px" width="10.4" height="6.4" viewBox="0 0 10.4 6.4" ><path d="M0.35 0.35 5.2 5.85 10.05 0.35" fill="none" stroke="#bfbfbf" stroke-width="1"/></svg></main>
<div><svg style="left:0;top:0;pointer-events:none" width="1851" height="900" viewBox="0 0 1851 900"><defs><g id="wm" fill="#999" fill-opacity=".16" font-family="Liberation Sans, Noto Sans CJK SC, sans-serif" font-size="14" text-anchor="middle"><text y="5.700">羲</text><text y="19">6</text><text y="33">1</text><text y="47">0</text><text y="61">0</text></g></defs><use href="#wm" transform="translate(230.5,48) rotate(-20)"/><use href="#wm" transform="translate(530.5,48) rotate(-20)"/><use href="#wm" transform="translate(830.5,48) rotate(-20)"/><use href="#wm" transform="translate(1130.5,48) rotate(-20)"/><use href="#wm" transform="translate(1430.5,48) rotate(-20)"/><use href="#wm" transform="translate(1730.5,48) rotate(-20)"/><use href="#wm" transform="translate(230.5,235.5) rotate(-20)"/><use href="#wm" transform="translate(530.5,235.5) rotate(-20)"/><use href="#wm" transform="translate(830.5,235.5) rotate(-20)"/><use href="#wm" transform="translate(1130.5,235.5) rotate(-20)"/><use href="#wm" transform="translate(1430.5,235.5) rotate(-20)"/><use href="#wm" transform="translate(1730.5,235.5) rotate(-20)"/><use href="#wm" transform="translate(230.5,423) rotate(-20)"/><use href="#wm" transform="translate(530.5,423) rotate(-20)"/><use href="#wm" transform="translate(830.5,423) rotate(-20)"/><use href="#wm" transform="translate(1130.5,423) rotate(-20)"/><use href="#wm" transform="translate(1430.5,423) rotate(-20)"/><use href="#wm" transform="translate(1730.5,423) rotate(-20)"/><use href="#wm" transform="translate(230.5,610.5) rotate(-20)"/><use href="#wm" transform="translate(530.5,610.5) rotate(-20)"/><use href="#wm" transform="translate(830.5,610.5) rotate(-20)"/><use href="#wm" transform="translate(1130.5,610.5) rotate(-20)"/><use href="#wm" transform="translate(1430.5,610.5) rotate(-20)"/><use href="#wm" transform="translate(1730.5,610.5) rotate(-20)"/><use href="#wm" transform="translate(230.5,798) rotate(-20)"/><use href="#wm" transform="translate(530.5,798) rotate(-20)"/><use href="#wm" transform="translate(830.5,798) rotate(-20)"/><use href="#wm" transform="translate(1130.5,798) rotate(-20)"/><use href="#wm" transform="translate(1430.5,798) rotate(-20)"/><use href="#wm" transform="translate(1730.5,798) rotate(-20)"/></svg></div>
</body></html>
